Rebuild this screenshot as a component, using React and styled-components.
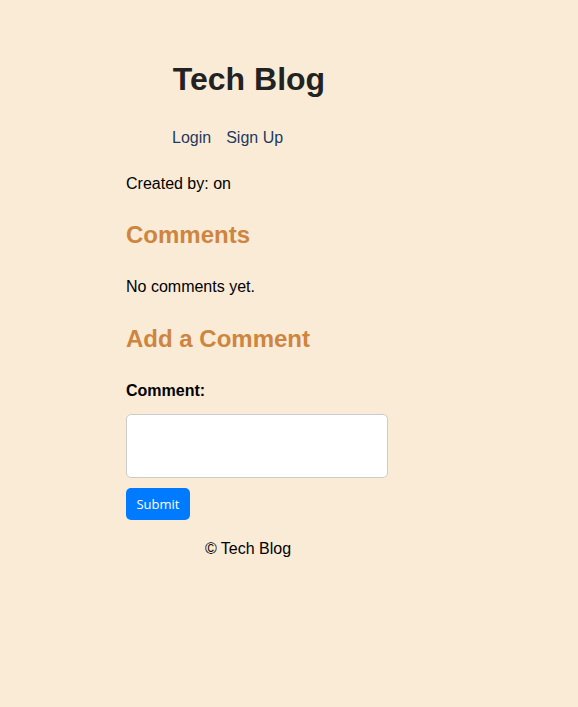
import React from 'react';
import styled, { createGlobalStyle } from 'styled-components';

const GlobalStyle = createGlobalStyle`
  html, body {
    margin: 0;
    padding: 0;
    background: #faebd7;
    font-family: 'Liberation Sans', Arial, sans-serif;
    color: #000;
  }
`;

const Page = styled.div`
  min-height: 707px;
  padding-left: 126px;
  padding-top: 61px;
  box-sizing: border-box;
`;

const Column = styled.div`
  width: 244px;
`;

const Header = styled.header`
  text-align: center;
`;

const Title = styled.h1`
  margin: 0;
  padding-left: 2px;
  font-size: 32px;
  font-weight: bold;
  color: #222;
  line-height: 37px;
`;

const Nav = styled.nav`
  display: flex;
  gap: 15px;
  padding-left: 46px;
  margin-top: 31px;
  line-height: 18px;

  a {
    color: #1e3a5f;
    text-decoration: none;
    font-size: 16px;
  }
`;

const Text = styled.p`
  margin: ${p => p.$top}px 0 0;
  font-size: 16px;
  line-height: 18px;
`;

const Heading = styled.h2`
  margin: ${p => p.$top}px 0 0;
  font-size: 24px;
  line-height: 28px;
  color: #cd853f;
`;

const Form = styled.form`
  margin-top: 29px;
`;

const Label = styled.label`
  display: block;
  font-weight: bold;
  font-size: 16px;
  line-height: 18px;
`;

const TextArea = styled.textarea`
  display: block;
  margin-top: 14px;
  width: 262px;
  height: 64px;
  box-sizing: border-box;
  border: 1px solid #ccc;
  border-radius: 5px;
  background: #fff;
  resize: none;
`;

const Button = styled.button`
  display: block;
  margin-top: 10px;
  width: 64px;
  height: 32px;
  border: none;
  border-radius: 5px;
  background: #007bff;
  color: #fff;
  font-family: 'Open Sans', 'DejaVu Sans', sans-serif;
  font-size: 13px;
  cursor: pointer;
`;

const Footer = styled.footer`
  margin-top: 20px;
  text-align: center;
  font-size: 16px;
  line-height: 18px;
`;

export default function App() {
  return (
    <>
      <GlobalStyle />
      <Page>
        <Column>
          <Header>
            <Title>Tech Blog</Title>
            <Nav>
              <a href="#">Login</a>
              <a href="#">Sign Up</a>
            </Nav>
          </Header>
          <Text $top={28}>Created by:  on</Text>
          <Heading $top={28}>Comments</Heading>
          <Text $top={29}>No comments yet.</Text>
          <Heading $top={29}>Add a Comment</Heading>
          <Form>
            <Label htmlFor="comment">Comment:</Label>
            <TextArea id="comment" />
            <Button type="submit">Submit</Button>
          </Form>
          <Footer>© Tech Blog</Footer>
        </Column>
      </Page>
    </>
  );
}
